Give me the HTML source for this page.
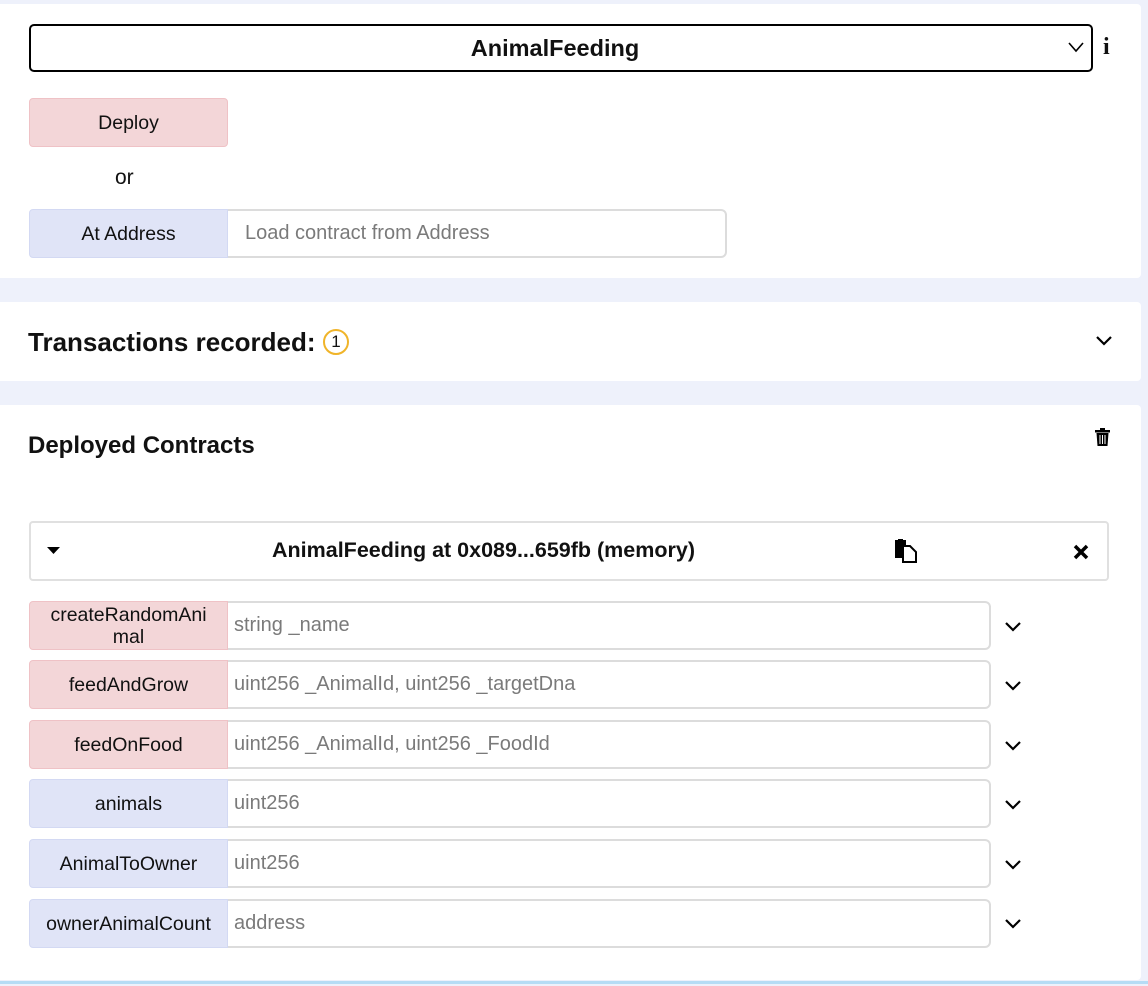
<!DOCTYPE html>
<html><head><style>
*{box-sizing:border-box;margin:0;padding:0}
body{width:1148px;height:986px;background:#eef1fb;font-family:"Liberation Sans",Arial,sans-serif;position:relative;overflow:hidden;color:#111}
.panel{position:absolute;left:0;width:1141px;background:#fff;border-radius:0 4px 4px 0}
.abs{position:absolute}
.btn{position:absolute;left:29px;width:199px;height:49px;display:flex;align-items:center;justify-content:center;text-align:center;font-size:19.5px;line-height:22px;border-radius:4px 0 0 4px;white-space:nowrap}
.red{background:#f3d6d8;border:1px solid #efc2c6}
.blue{background:#e0e4f7;border:1px solid #d3d9f3}
.inp{position:absolute;left:228px;width:763px;height:49px;border:2px solid #dcdcdc;border-left:none;border-radius:0 6px 6px 0;font-size:20px;color:#7a7a7a;padding-left:6px;display:flex;align-items:center;background:#fff}
.chev{position:absolute;left:1004px;width:18px;height:12px}
</style></head><body>
<div class="panel" style="top:4px;height:274px"></div>
<div class="panel" style="top:302px;height:79px"></div>
<div class="panel" style="top:405px;height:575px"></div>
<div class="abs" style="left:0;top:981px;width:1148px;height:3px;background:#b6dcf5"></div>

<div class="abs" style="left:29px;top:24px;width:1064px;height:48px;border:2px solid #000;border-radius:5px;display:flex;align-items:center;justify-content:center;font-weight:bold;font-size:23.5px;padding-right:12px">AnimalFeeding</div>
<svg class="abs" style="left:1068px;top:41px" width="16" height="12" viewBox="0 0 16 12"><path d="M1 2l7 8 7-8" fill="none" stroke="#000" stroke-width="1.6"/></svg>
<div class="abs" style="left:1103px;top:34px;font-family:'Liberation Serif',serif;font-weight:bold;font-size:24px">i</div>

<div class="btn red" style="top:98px;border-radius:4px">Deploy</div>
<div class="abs" style="left:115px;top:166px;font-size:21px">or</div>
<div class="btn blue" style="top:209px">At Address</div>
<div class="inp" style="top:209px;width:499px;padding-left:17px">Load contract from Address</div>

<div class="abs" style="left:28px;top:327px;font-weight:bold;font-size:26px">Transactions recorded:</div>
<div class="abs" style="left:323px;top:329px;width:26px;height:26px;border:2px solid #f0b429;border-radius:50%;font-size:17px;display:flex;align-items:center;justify-content:center">1</div>
<svg class="abs" style="left:1095px;top:335px" width="18" height="12" viewBox="0 0 18 12"><path d="M2 2l7 7 7-7" fill="none" stroke="#000" stroke-width="2.2"/></svg>

<div class="abs" style="left:28px;top:432px;font-weight:bold;font-size:24px">Deployed Contracts</div>
<svg class="abs" style="left:1094px;top:427px" width="17" height="20" viewBox="0 0 17 20"><rect x="1" y="3" width="15" height="2.5" fill="#000"/><rect x="6" y="1" width="5" height="2" fill="#000"/><path d="M2.5 6h12l-1 13h-10z" fill="#000"/><path d="M6 8v9M8.5 8v9M11 8v9" stroke="#fff" stroke-width="1"/></svg>

<div class="abs" style="left:29px;top:521px;width:1080px;height:60px;border:2px solid #e0e0e0;border-radius:4px"></div>
<svg class="abs" style="left:47px;top:547px" width="13" height="8"><path d="M0 0h13l-6.5 7z" fill="#000"/></svg>
<div class="abs" style="left:272px;top:538px;font-weight:bold;font-size:21.5px">AnimalFeeding at 0x089...659fb (memory)</div>
<svg class="abs" style="left:894px;top:539px" width="24" height="24" viewBox="0 0 24 24"><rect x="1" y="1" width="11" height="18" fill="#000"/><rect x="4" y="0" width="5" height="3" fill="#000"/><path d="M9 7h7l6 6v10H9z" fill="#fff" stroke="#000" stroke-width="2"/></svg>
<svg class="abs" style="left:1073px;top:544px" width="16" height="16" viewBox="0 0 16 16"><path d="M2 2l12 12M14 2L2 14" stroke="#000" stroke-width="3.5"/></svg>

<div class="btn red" style="top:601px">createRandomAni<br>mal</div><div class="inp" style="top:601px">string _name</div>
<div class="btn red" style="top:660px">feedAndGrow</div><div class="inp" style="top:660px">uint256 _AnimalId, uint256 _targetDna</div>
<div class="btn red" style="top:720px">feedOnFood</div><div class="inp" style="top:720px">uint256 _AnimalId, uint256 _FoodId</div>
<div class="btn blue" style="top:779px">animals</div><div class="inp" style="top:779px">uint256</div>
<div class="btn blue" style="top:839px">AnimalToOwner</div><div class="inp" style="top:839px">uint256</div>
<div class="btn blue" style="top:899px">ownerAnimalCount</div><div class="inp" style="top:899px">address</div>

<svg class="chev" style="top:621px" viewBox="0 0 18 12"><path d="M2 2l7 7 7-7" fill="none" stroke="#000" stroke-width="2.2"/></svg>
<svg class="chev" style="top:680px" viewBox="0 0 18 12"><path d="M2 2l7 7 7-7" fill="none" stroke="#000" stroke-width="2.2"/></svg>
<svg class="chev" style="top:740px" viewBox="0 0 18 12"><path d="M2 2l7 7 7-7" fill="none" stroke="#000" stroke-width="2.2"/></svg>
<svg class="chev" style="top:799px" viewBox="0 0 18 12"><path d="M2 2l7 7 7-7" fill="none" stroke="#000" stroke-width="2.2"/></svg>
<svg class="chev" style="top:859px" viewBox="0 0 18 12"><path d="M2 2l7 7 7-7" fill="none" stroke="#000" stroke-width="2.2"/></svg>
<svg class="chev" style="top:918px" viewBox="0 0 18 12"><path d="M2 2l7 7 7-7" fill="none" stroke="#000" stroke-width="2.2"/></svg>
</body></html>
